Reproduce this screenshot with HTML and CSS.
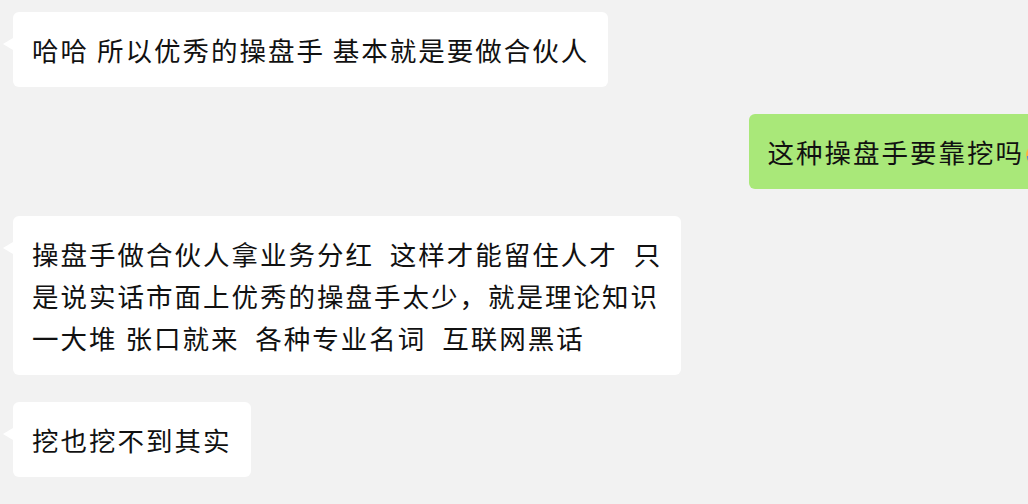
FILE: index.html
```html
<!DOCTYPE html>
<html lang="zh-CN">
<head>
  <meta charset="UTF-8">
  <meta name="viewport" content="width=device-width, initial-scale=1">
  <title>聊天记录</title>
  <link rel="stylesheet" href="styles.css">
</head>
<body>
  <div class="chat">
    <div class="row">
      <div class="bubble">哈哈 所以优秀的操盘手 基本就是要做合伙人</div>
    </div>

    <div class="row me">
      <div class="bubble green">这种操盘手要靠挖吗<svg class="emoji" viewBox="0 0 24 24" width="24" height="24">
          <circle cx="12" cy="12" r="11" fill="#f7b640"/>
          <path d="M2 13c0 3 1 5 2 6l3-3c-1-1-2-2-2-3z" fill="#4a90d9"/>
          <path d="M22 13c0 3-1 5-2 6l-3-3c1-1 2-2 2-3z" fill="#4a90d9"/>
        </svg></div>
    </div>

    <div class="row">
      <div class="bubble">操盘手做合伙人拿业务分红&nbsp; 这样才能留住人才&nbsp; 只<br>是说实话市面上优秀的操盘手太少，就是理论知识<br>一大堆 张口就来&nbsp; 各种专业名词&nbsp; 互联网黑话</div>
    </div>

    <div class="row">
      <div class="bubble">挖也挖不到其实</div>
    </div>
  </div>
</body>
</html>
```

FILE: styles.css
```css
html, body {
  margin: 0;
  padding: 0;
}
body {
  background: #f2f2f2;
  font-family: "Noto Sans CJK SC", "Noto Sans", sans-serif;
  color: #111;
  width: 1028px;
  height: 504px;
  overflow: hidden;
}
.chat {
  display: flex;
  flex-direction: column;
  gap: 27px;
  padding-top: 12px;
}
.row {
  display: flex;
  justify-content: flex-start;
  padding-left: 13px;
}
.row.me {
  justify-content: flex-end;
  padding-left: 0;
  margin-right: -51px;
}
.bubble {
  position: relative;
  background: #fff;
  border-radius: 6px;
  padding: 16.5px 19px;
  font-size: 26.5px;
  letter-spacing: 2px;
  line-height: 42px;
  white-space: nowrap;
}
.bubble::before {
  content: "";
  position: absolute;
  left: -10px;
  top: 26px;
  border-style: solid;
  border-width: 6px 10px 6px 0;
  border-color: transparent #fff transparent transparent;
}
.bubble.green {
  background: #a9e879;
  padding-right: 30px;
}
.bubble.green::before {
  left: auto;
  right: -10px;
  border-width: 6px 0 6px 10px;
  border-color: transparent transparent transparent #a9e879;
}
.emoji {
  vertical-align: -4px;
  margin-left: 1px;
}
```
